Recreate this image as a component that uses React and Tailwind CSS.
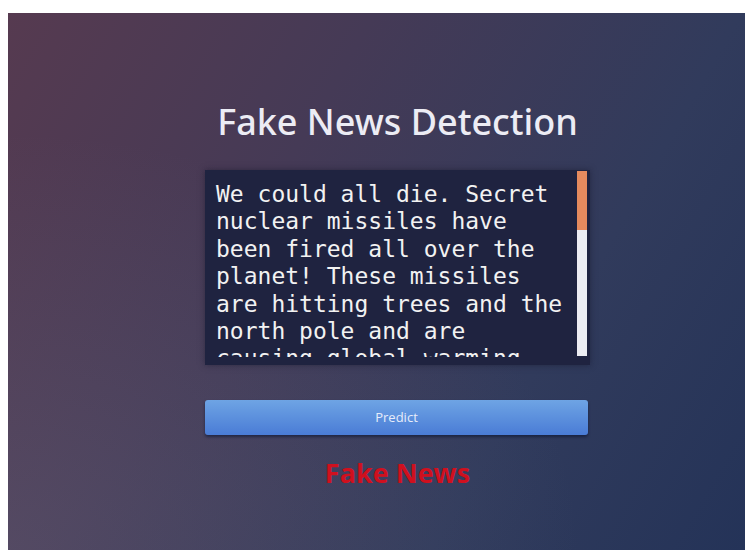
export default function App() {
  const text =
    "We could all die. Secret nuclear missiles have been fired all over the planet! These missiles are hitting trees and the north pole and are causing global warming. We must act now before it is too late.";
  return (
    <div className="w-[745px] h-[550px] bg-white overflow-hidden">
      <div className="ml-[8px] mt-[13px] w-[737px] h-[537px] bg-[linear-gradient(120deg,#563a50_0%,#453a56_35%,#313b5c_70%,#243358_100%)] relative">
        <div className="absolute inset-0 bg-[radial-gradient(ellipse_at_0%_100%,rgba(120,120,140,0.25),transparent_55%)]" />
        <div className="relative pl-[197px] pt-[86px] w-[582px]">
          <h1
            className="text-[36px] leading-[46px] font-medium text-[#ececf4] text-center"
            style={{ fontFamily: '"Noto Sans", sans-serif' }}
          >
            Fake News Detection
          </h1>
          <div className="mt-[25px] h-[195px] bg-[#1f2340] shadow-[0_0_6px_rgba(20,20,40,0.5)] flex">
            <div className="flex-1 pl-[11px] mt-[11px] mb-[8px] overflow-hidden">
              <div
                className="w-[350px] text-[23px] leading-[27.4px] text-[#f2f2f2] whitespace-pre-wrap"
                style={{ fontFamily: '"DejaVu Sans Mono", monospace' }}
              >
                {text}
              </div>
            </div>
            <div className="w-[10px] mr-[3px] mt-[1px] mb-[9px] flex flex-col">
              <div className="h-[59px] bg-[#e58a5e]" />
              <div className="flex-1 bg-[#ececf2]" />
            </div>
          </div>
          <button
            className="mt-[35px] w-[383px] h-[35px] rounded-[3px] bg-[linear-gradient(180deg,#6ea4e4,#4a7cd6)] text-[13px] text-[#e6ecfa] shadow-[0_2px_3px_rgba(10,20,50,0.6)]"
            style={{ fontFamily: '"Open Sans", sans-serif' }}
          >
            Predict
          </button>
          <div
            className="mt-[18px] text-center text-[27px] font-bold text-[#d0101e]"
            style={{ fontFamily: '"Open Sans", sans-serif' }}
          >
            Fake News
          </div>
        </div>
      </div>
    </div>
  );
}
